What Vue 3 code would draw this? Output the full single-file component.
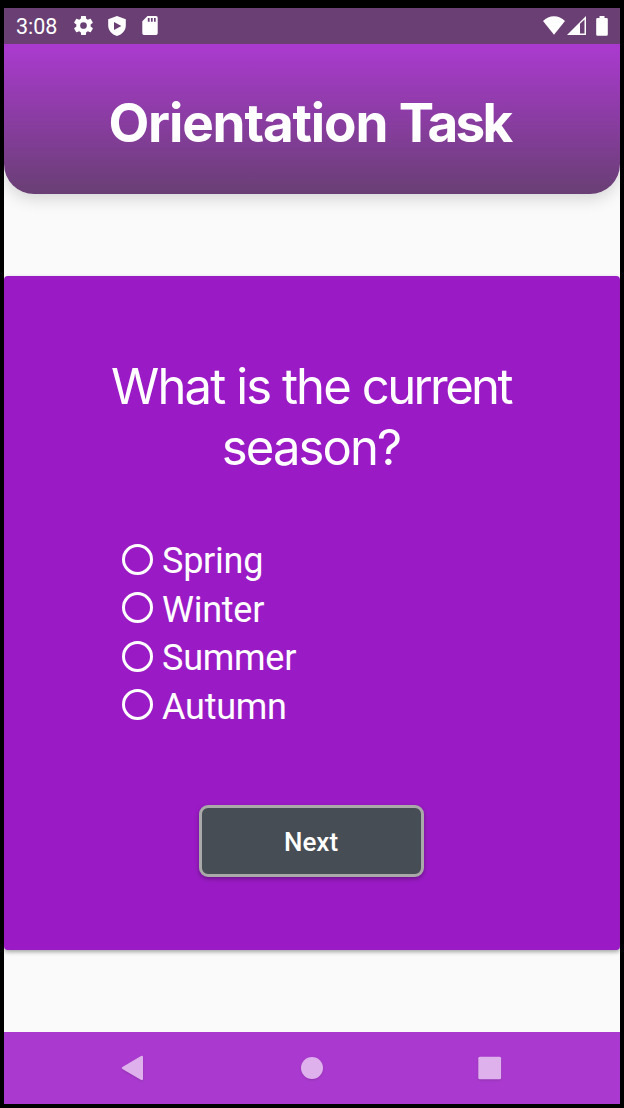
<script setup>
import { ref } from 'vue'

const seasons = ['Spring', 'Winter', 'Summer', 'Autumn']
const selected = ref('')
</script>

<template>
  <div class="device">
    <div class="statusbar">
      <span class="clock">3:08</span>
      <svg class="gear" viewBox="0 0 24 24" width="23" height="23">
        <path d="M19.4 13c0-.3.1-.6.1-1s0-.7-.1-1l2.100-1.650c.2-.15.250-.42.120-.64l-2-3.460c-.12-.22-.39-.3-.61-.22l-2.490 1c-.52-.4-1.080-.73-1.690-.98l-.38-2.650C14.460 2.180 14.250 2 14 2h-4c-.25 0-.46.180-.49.420l-.38 2.650c-.61.250-1.170.59-1.690.98l-2.490-1c-.23-.09-.49 0-.61.220l-2 3.460c-.13.220-.07.490.120.640L4.600 11c0 .3-.1.600-.1 1s0 .7.100 1l-2.140 1.650c-.19.150-.24.420-.12.640l2 3.460c.12.220.39.300.61.220l2.490-1c.52.400 1.080.730 1.690.980l.38 2.650c.03.240.24.420.49.420h4c.25 0 .46-.18.490-.42l.38-2.650c.61-.25 1.170-.59 1.690-.98l2.490 1c.23.090.49 0 .61-.22l2-3.460c.12-.22.070-.49-.12-.64L19.400 13zM12 15.500a3.500 3.500 0 1 1 0-7 3.500 3.500 0 0 1 0 7z" />
      </svg>
      <svg class="shield" viewBox="0 0 18 20" width="18" height="20">
        <path fill-rule="evenodd" d="M9 0 L17.800 3.300 V9.500 C17.800 14.500 14.200 18.400 9 20 C3.800 18.400 .2 14.500 .2 9.500 V3.300 Z M6 5.900 V14.100 L13.400 10 Z" />
      </svg>
      <svg class="sd" viewBox="0 0 16 19" width="16" height="19">
        <path fill-rule="evenodd" d="M5.500 0 H14 Q15.700 0 15.700 1.700 V17.300 Q15.700 19 14 19 H2 Q.3 19 .3 17.300 V5.300 Z M5.800 2 V5.800 H7.600 V2 Z M8.900 2 V5.800 H10.700 V2 Z M12 2 V5.800 H13.700 V2 Z" />
      </svg>
      <svg class="wifi" viewBox="0 0 22 19" width="22" height="19">
        <path d="M0 5 Q4.700 .3 11 .3 T22 5 L11 18.800 Z" />
      </svg>
      <svg class="signal" viewBox="0 0 19 19" width="19" height="19">
        <path fill-rule="evenodd" d="M19 0 V19 H0 Z M13 7.800 V17.500 H17.500 V3.400 Z" />
      </svg>
      <svg class="battery" viewBox="0 0 12 20" width="12" height="20">
        <path d="M3.500 0 H8.500 V2 H10.500 Q11.800 2 11.800 3.300 V18.500 Q11.800 19.800 10.500 19.800 H1.500 Q.2 19.800 .2 18.500 V3.300 Q.2 2 1.500 2 H3.500 Z" />
      </svg>
    </div>

    <main class="screen">
      <header class="header">
        <h1>Orientation <span class="tight">Task</span></h1>
      </header>
      <section class="card">
        <h2>What is the <span class="tight">current</span><br />season?</h2>
        <div class="options">
          <label v-for="s in seasons" :key="s" class="option">
            <input v-model="selected" type="radio" name="season" :value="s" />
            <span>{{ s }}</span>
          </label>
        </div>
        <button class="next" type="button">Next</button>
      </section>
    </main>

    <nav class="navbar">
      <svg viewBox="0 0 24 28" width="24" height="28">
        <path d="M20.600 2.200 Q22.900 1 23 3 V25 Q22.900 26.800 20.800 25.800 L2.400 15 Q1 14 2.400 13 Z" />
      </svg>
      <svg viewBox="0 0 24 28" width="24" height="28">
        <circle cx="13" cy="14" r="11" />
      </svg>
      <svg viewBox="0 0 24 28" width="24" height="28">
        <rect x=".3" y="2.700" width="22.800" height="22.600" rx="1.500" />
      </svg>
    </nav>
  </div>
</template>

<style>
body {
  margin: 0;
  background: #000;
}
</style>

<style scoped>
.device {
  box-sizing: border-box;
  width: 624px;
  height: 1108px;
  padding: 8px 4px 4px;
  background: #000;
  color: #fff;
  display: flex;
  flex-direction: column;
  font-family: Roboto, sans-serif;
}

.statusbar {
  height: 36px;
  background: #693f74;
  display: flex;
  align-items: center;
  padding: 0 12px;
}

.statusbar svg {
  fill: #fff;
  display: block;
  margin-bottom: 1px;
}

.clock {
  width: 56px;
  font-size: 21.5px;
  line-height: 36px;
  height: 36px;
  padding-top: 1px;
  box-sizing: border-box;
}

.shield {
  margin-left: 13px;
}

.sd {
  margin-left: 16px;
}

.wifi {
  margin-left: auto;
}

.signal {
  margin-left: 2px;
}

.battery {
  margin-left: 10px;
}

.screen {
  height: 988px;
  background: #fafafa;
  overflow: hidden;
}

.header {
  height: 150px;
  border-radius: 0 0 30px 30px;
  background: linear-gradient(#ab3ad0, #693f74);
  box-shadow: 0 5px 16px rgba(0, 0, 0, 0.15);
  display: flex;
  justify-content: center;
}

h1 {
  margin: 47px 5px 0 0;
  font: 700 53px/64px Inter, sans-serif;
  letter-spacing: -1.15px;
  white-space: nowrap;
}

h1 .tight {
  letter-spacing: -2.7px;
}

.card {
  height: 674px;
  margin-top: 82px;
  box-sizing: border-box;
  padding-top: 80px;
  border-radius: 4px;
  background: #9a1bc5;
  box-shadow: 0 2px 4px rgba(0, 0, 0, 0.35);
  display: flex;
  flex-direction: column;
  align-items: center;
}

h2 {
  margin: 0 2px 0 0;
  font: 400 49px/61px Inter, sans-serif;
  letter-spacing: -1.9px;
  text-align: center;
  white-space: nowrap;
}

h2 .tight {
  letter-spacing: -2.6px;
}

.options {
  align-self: stretch;
  margin: 57px 0 0 118px;
}

.option {
  display: flex;
  align-items: center;
  height: 48.5px;
  gap: 9px;
  font-size: 36px;
  line-height: 44px;
  letter-spacing: -0.25px;
}

.option span {
  padding-top: 4px;
}

.option input {
  appearance: none;
  flex: none;
  box-sizing: border-box;
  width: 31px;
  height: 31px;
  margin: 0;
  border: 3px solid #fff;
  border-radius: 50%;
}

.option input:checked {
  background: radial-gradient(#fff 45%, transparent 50%);
}

.next {
  width: 225px;
  height: 72px;
  margin: 76px 2px 0 0;
  padding: 2px 0 0;
  border: 3px solid #a9a9a9;
  border-radius: 9px;
  background: #464d54;
  color: #fff;
  font: 500 26px/30px Roboto, sans-serif;
  box-shadow: 0 2px 4px rgba(0, 0, 0, 0.3);
}

.navbar {
  height: 72px;
  background: #aa3acf;
  display: flex;
  align-items: center;
  justify-content: space-between;
  padding: 0 118px 0 116px;
}

.navbar svg {
  fill: #deb0ec;
  filter: drop-shadow(0 1px 1px rgba(0, 0, 0, 0.15));
}
</style>
